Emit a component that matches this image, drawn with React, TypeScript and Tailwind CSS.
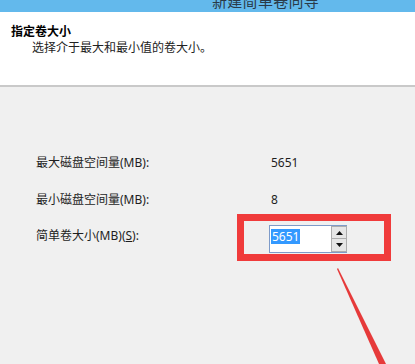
export default function App() {
  const font = { fontFamily: '"Noto Sans", "Noto Sans CJK SC", sans-serif' };

  return (
    <div
      className="relative w-[415px] h-[364px] overflow-hidden bg-[#f0f0f0] text-[#1e1e1e]"
      style={font}
    >
      {/* Title bar, cut off at the top */}
      <div className="h-[12px] bg-[#63b9ec] overflow-hidden pl-[212px]">
        <div className="-mt-[6px] text-[15px] leading-[15px] text-[#2a3a48] tracking-[0.3px]">
          新建简单卷向导
        </div>
      </div>

      {/* Header */}
      <div className="h-[73px] bg-white pt-[12px] pl-[11px]">
        <div className="text-[12px] leading-[16px] font-bold text-black">指定卷大小</div>
        <div className="pl-[21px] text-[12px] leading-[16px] text-[#222]">
          选择介于最大和最小值的卷大小。
        </div>
      </div>
      <div className="h-[2px] bg-[#c9c9c9]" />

      {/* Body */}
      <div className="pt-[66px] pl-[36px] text-[12px]">
        <div className="flex h-[20px] items-center">
          <span className="w-[233px]">最大磁盘空间量(MB):</span>
          <span className="pl-[2px]">5651</span>
        </div>
        <div className="flex h-[20px] items-center mt-[17px]">
          <span className="w-[233px]">最小磁盘空间量(MB):</span>
          <span className="pl-[2px]">8</span>
        </div>
        <div className="flex items-start mt-[15px]">
          <span className="w-[233px] leading-[20px] mt-[1px]">
            简单卷大小(MB)(<span className="underline">S</span>):
          </span>
          <div className="flex w-[78px] h-[28px] border border-[#7e9bc9] bg-white">
            <div className="flex-1 pt-[2px] pl-[1px]">
              <span className="inline-block bg-[#3399ff] text-white leading-[15px] px-[1px]">
                5651
              </span>
            </div>
            <div className="flex flex-col w-[16px] mr-[-1px] mt-[0px]">
              <div className="h-[13px] border border-[#adadad] bg-[#e6e6e6] flex items-center justify-center">
                <svg width="7" height="4" viewBox="0 0 7 4">
                  <path d="M0 4 L3.5 0 L7 4 Z" fill="#111" />
                </svg>
              </div>
              <div className="h-[13px] border border-t-0 border-[#adadad] bg-[#e6e6e6] flex items-center justify-center">
                <svg width="7" height="4" viewBox="0 0 7 4">
                  <path d="M0 0 L7 0 L3.5 4 Z" fill="#111" />
                </svg>
              </div>
            </div>
          </div>
        </div>
      </div>

      {/* Red annotation box */}
      <div className="absolute left-[237px] top-[214px] w-[154px] h-[47px] border-[7px] border-[#f03b3b]" />

      {/* Red annotation arrow */}
      <svg className="absolute left-0 top-0" width="415" height="364" viewBox="0 0 415 364">
        <polygon points="337,269 379,364 386,364 338,268" fill="#e63a3a" />
      </svg>
    </div>
  );
}
